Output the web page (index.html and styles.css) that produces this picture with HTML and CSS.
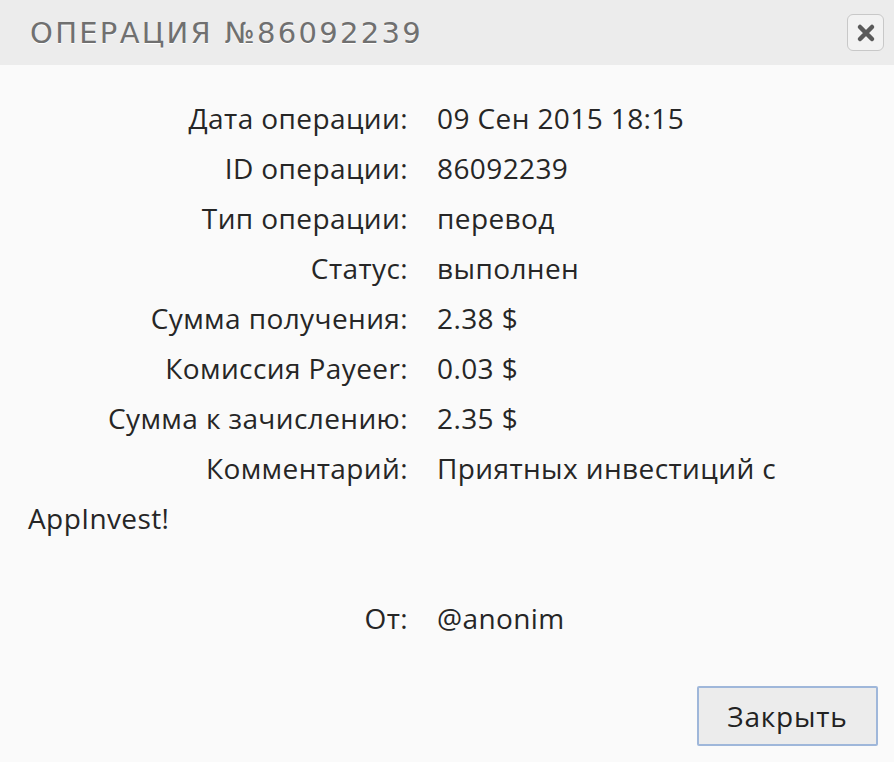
FILE: index.html
```html
<!DOCTYPE html>
<html lang="ru">
<head>
<meta charset="utf-8">
<link rel="stylesheet" href="styles.css">
</head>
<body>
<div class="dialog">
  <div class="header">
    <h1 class="title">Операция №86092239</h1>
    <button class="close" aria-label="Закрыть">
      <svg width="20" height="20" viewBox="0 0 20 20"><path d="M4 4 L16 16 M16 4 L4 16" stroke="#5a5a5a" stroke-width="4.5" stroke-linecap="round"/></svg>
    </button>
  </div>
  <div class="content">
    <div class="row"><span class="label">Дата операции:</span>09 Сен 2015 18:15</div>
    <div class="row"><span class="label">ID операции:</span>86092239</div>
    <div class="row"><span class="label">Тип операции:</span>перевод</div>
    <div class="row"><span class="label">Статус:</span>выполнен</div>
    <div class="row"><span class="label">Сумма получения:</span>2.38 $</div>
    <div class="row"><span class="label">Комиссия Payeer:</span>0.03 $</div>
    <div class="row"><span class="label">Сумма к зачислению:</span>2.35 $</div>
    <div class="row"><span class="label">Комментарий:</span>Приятных инвестиций с AppInvest!<br><br></div>
    <div class="row"><span class="label">От:</span>@anonim</div>
  </div>
  <div class="footer">
    <button class="btn">Закрыть</button>
  </div>
</div>
</body>
</html>
```
FILE: styles.css
```css
html, body {
  margin: 0;
  padding: 0;
  background: #fafafa;
}
body {
  font-family: "Open Sans", "Liberation Sans", sans-serif;
  color: #222;
}
.dialog {
  width: 894px;
  height: 762px;
  display: flex;
  flex-direction: column;
}
.header {
  flex-shrink: 0;
  height: 65px;
  background: #ececec;
  display: flex;
  align-items: center;
  justify-content: space-between;
  padding: 0 10px 0 30px;
  box-sizing: border-box;
}
.title {
  margin: 0;
  font-family: "DejaVu Sans", sans-serif;
  font-weight: normal;
  font-size: 29px;
  letter-spacing: 2.3px;
  text-transform: uppercase;
  color: #707070;
  text-shadow: 0 1px 0 #fff;
}
.close {
  width: 37px;
  height: 37px;
  border: 1px solid #c8c8c8;
  border-radius: 6px;
  background: #f2f2f2;
  display: flex;
  align-items: center;
  justify-content: center;
  padding: 0;
}
.content {
  padding: 28px 0 0 28px;
  font-size: 28px;
  letter-spacing: 0.4px;
  line-height: 50px;
  color: #262626;
}
.row {
  width: 760px;
}
.label {
  float: left;
  width: 380px;
  text-align: right;
  margin-right: 29px;
}
.footer {
  margin-top: auto;
  display: flex;
  justify-content: flex-end;
  padding: 0 16px 16px 0;
}
.btn {
  width: 181px;
  height: 60px;
  border: 2px solid #9fb7da;
  border-radius: 2px;
  background: #ececec;
  font-family: "Open Sans", sans-serif;
  font-size: 28px;
  letter-spacing: 0.8px;
  color: #222;
}
```
